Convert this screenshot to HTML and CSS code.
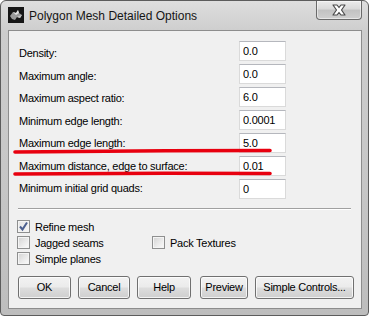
FILE: index.html
```html
<!doctype html>
<html>
<head>
<meta charset="utf-8">
<title>Polygon Mesh Detailed Options</title>
<link rel="stylesheet" href="styles.css">
</head>
<body>
<div class="window">
	<div class="titlebar">
		<svg class="app_icon" width="16" height="16" viewBox="0 0 16 16">
			<rect width="16" height="16" fill="#161616"/>
			<path d="M2 9 L5 5 L8 6 L10 3 L11 6 L14 8 L12 11 L9 10 L7 13 L4 12 Z" fill="#9a9a9a"/>
			<path d="M5 5 L8 6 L10 3 L11 6 L8 8 Z" fill="#e2e2e2"/>
			<path d="M9 10 L12 11 L14 8 L11 9 Z" fill="#c8c8c8"/>
		</svg>
		<span class="title">Polygon Mesh Detailed Options</span>
		<div class="close">
			<svg width="16" height="12" viewBox="0 0 16 12">
				<path d="M2 1 H6 L8 3.5 L10 1 H14 L10.5 6 L14 11 H10 L8 8.5 L6 11 H2 L5.5 6 Z" fill="#fff" stroke="#4a4a4a" stroke-width="1.2" stroke-linejoin="round"/>
			</svg>
		</div>
	</div>
	<div class="client">
		<div class="fields">
			<div class="labels">
				<div class="label">Density:</div>
				<div class="label">Maximum angle:</div>
				<div class="label">Maximum aspect ratio:</div>
				<div class="label">Minimum edge length:</div>
				<div class="label">Maximum edge length:</div>
				<div class="label">Maximum distance, edge to surface:</div>
				<div class="label">Minimum initial grid quads:</div>
			</div>
			<div class="edits">
				<input class="edit" type="text" value="0.0" readonly>
				<input class="edit" type="text" value="0.0" readonly>
				<input class="edit" type="text" value="6.0" readonly>
				<input class="edit" type="text" value="0.0001" readonly>
				<input class="edit" type="text" value="5.0" readonly>
				<input class="edit" type="text" value="0.01" readonly>
				<input class="edit" type="text" value="0" readonly>
			</div>
		</div>
		<div class="sep"></div>
		<div class="checks">
			<div class="check_row">
				<span class="check"><span class="box checked">
					<svg width="11" height="11" viewBox="0 0 11 11"><path d="M2 5.5 L4.5 8.5 L9 1.5" fill="none" stroke="#4b5f8f" stroke-width="2"/></svg>
				</span>Refine mesh</span>
			</div>
			<div class="check_row">
				<span class="check"><span class="box"></span>Jagged seams</span>
				<span class="check"><span class="box"></span>Pack Textures</span>
			</div>
			<div class="check_row">
				<span class="check"><span class="box"></span>Simple planes</span>
			</div>
		</div>
		<div class="buttons">
			<button class="btn btn_ok">OK</button>
			<button class="btn btn_cancel">Cancel</button>
			<button class="btn btn_help">Help</button>
			<button class="btn btn_preview">Preview</button>
			<button class="btn btn_simple">Simple Controls...</button>
		</div>
		<svg class="marks" width="354" height="279" viewBox="0 0 354 279">
			<path d="M7 122 C80 121 180 120.5 262 120.5" fill="none" stroke="#e8000f" stroke-width="3.6" stroke-linecap="round"/>
			<path d="M7 144 C80 143.5 180 143 262 143.5" fill="none" stroke="#e8000f" stroke-width="3.6" stroke-linecap="round"/>
		</svg>
	</div>
</div>
</body>
</html>
```

FILE: styles.css
```css
body {margin: 0; padding: 0; background: #fff;}

.window {width: 369px; height: 316px; box-sizing: border-box; border: 1px solid #5c5c5c; border-radius: 6px 6px 4px 4px; padding: 0 6px 6px 7px; background: linear-gradient(180deg, #dedede 0%, #cdcdcd 10%, #c6c6c6 60%, #bdbdbd 100%); display: flex; flex-direction: column;}

.titlebar {height: 29px; display: flex; align-items: flex-start; flex-shrink: 0;}
.app_icon {margin: 6px 0 0 0; flex-shrink: 0;}
.title {margin: 8px 0 0 5px; font: 12px "Liberation Sans", Arial, sans-serif; color: #151515;}
.close {margin-left: auto; width: 46px; height: 19px; box-sizing: border-box; border: 1px solid #6a6a6a; border-top: none; border-radius: 0 0 4px 4px; background: linear-gradient(180deg, #ececec 0%, #d9d9d9 45%, #c2c2c2 50%, #cfcfcf 100%); display: flex; align-items: center; justify-content: center; box-shadow: inset 0 0 0 1px rgba(255,255,255,0.5);}

.client {position: relative; flex: 1; box-sizing: border-box; background: #f0f0f0; border: 1px solid #8d8d8d; padding: 10px 0 0 0; font: 11px "Liberation Sans", Arial, sans-serif; letter-spacing: -0.25px; color: #000;}

.fields {display: flex;}
.labels {width: 220px; padding: 1px 0 0 10px;}
.label {height: 22.5px; line-height: 22.5px; white-space: nowrap;}
.edits {display: flex; flex-direction: column; gap: 3px;}
.edit {width: 47px; height: 20px; box-sizing: border-box; margin: 0; padding: 0 3px; border: 1px solid #dadada; border-top-color: #b5b7bd; background: #fff; font: 11px "Liberation Sans", Arial, sans-serif; letter-spacing: -0.25px; color: #000; outline: none;}

.sep {margin: 8px 10px 0 9px; border-top: 1px solid #a0a0a0; border-bottom: 1px solid #fff;}

.checks {margin: 9px 0 0 8px;}
.check_row {display: flex; height: 16px;}
.check {display: flex; align-items: center; width: 135px; line-height: 16px; white-space: nowrap;}
.box {width: 13px; height: 13px; box-sizing: border-box; margin-right: 5px; border: 1px solid #8e8f8f; background: linear-gradient(135deg, #d2d2d2 0%, #ececec 60%, #fbfbfb 100%); box-shadow: inset 0 0 0 1px #f4f4f4; display: flex; align-items: center; justify-content: center;}
.box.checked {background: linear-gradient(135deg, #e4e4e4 0%, #f6f6f6 100%);}

.buttons {display: flex; margin: 9px 0 0 9px;}
.btn {height: 23px; box-sizing: border-box; margin: 0 7px 0 0; padding: 0; border: 1px solid #707070; border-radius: 3px; background: linear-gradient(180deg, #f2f2f2 0%, #ebebeb 48%, #dddddd 52%, #cfcfcf 100%); box-shadow: inset 0 0 0 1px rgba(255,255,255,0.75); font: 11px "Liberation Sans", Arial, sans-serif; letter-spacing: -0.25px; color: #000;}
.btn_ok {width: 53px;}
.btn_cancel {width: 52px;}
.btn_help {width: 54px; margin-right: 9px;}
.btn_preview {width: 48px; margin-right: 7px;}
.btn_simple {width: 99px;}

.marks {position: absolute; left: -1px; top: -1px; pointer-events: none;}
```
